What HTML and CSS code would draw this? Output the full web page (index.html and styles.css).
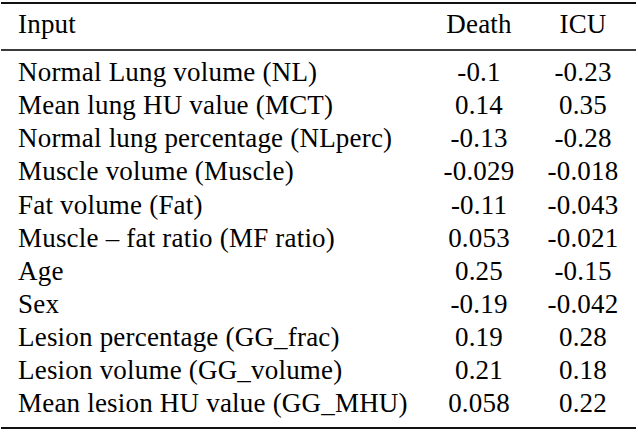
FILE: index.html
```html
<!DOCTYPE html>
<html>
<head>
<meta charset="utf-8">
<link rel="stylesheet" href="styles.css">
</head>
<body>
<table class="tbl">
  <colgroup>
    <col class="c-input">
    <col class="c-death">
    <col class="c-icu">
  </colgroup>
  <thead>
    <tr><th class="lbl">Input</th><th>Death</th><th>ICU</th></tr>
  </thead>
  <tbody>
    <tr class="first"><td class="lbl">Normal Lung volume (NL)</td><td>-0.1</td><td>-0.23</td></tr>
    <tr><td class="lbl">Mean lung HU value (MCT)</td><td>0.14</td><td>0.35</td></tr>
    <tr><td class="lbl">Normal lung percentage (NLperc)</td><td>-0.13</td><td>-0.28</td></tr>
    <tr><td class="lbl">Muscle volume (Muscle)</td><td>-0.029</td><td>-0.018</td></tr>
    <tr><td class="lbl">Fat volume (Fat)</td><td>-0.11</td><td>-0.043</td></tr>
    <tr><td class="lbl">Muscle – fat ratio (MF ratio)</td><td>0.053</td><td>-0.021</td></tr>
    <tr><td class="lbl">Age</td><td>0.25</td><td>-0.15</td></tr>
    <tr><td class="lbl">Sex</td><td>-0.19</td><td>-0.042</td></tr>
    <tr><td class="lbl">Lesion percentage (GG_frac)</td><td>0.19</td><td>0.28</td></tr>
    <tr><td class="lbl">Lesion volume (GG_volume)</td><td>0.21</td><td>0.18</td></tr>
    <tr class="last"><td class="lbl">Mean lesion HU value (GG_MHU)</td><td>0.058</td><td>0.22</td></tr>
  </tbody>
</table>
</body>
</html>
```

FILE: styles.css
```css
html, body {
  margin: 0;
  padding: 0;
  background: #ffffff;
}
body {
  padding: 2px 0 0 1px;
  font-family: "Liberation Serif", "Times New Roman", Times, serif;
  font-size: 27px;
  color: #000;
}
.tbl {
  border-collapse: collapse;
  table-layout: fixed;
  width: 635px;
  border-top: 2px solid #111;
  border-bottom: 2px solid #111;
  font-family: "Liberation Serif", "Times New Roman", Times, serif;
  font-size: 27px;
  letter-spacing: 0.2px;
}
.c-input { width: 427px; }
.c-death { width: 102px; }
.c-icu { width: 106px; }
.tbl th, .tbl td {
  padding: 0;
  line-height: 33.1px;
  font-weight: normal;
  text-align: center;
  white-space: nowrap;
}
.tbl .lbl {
  text-align: left;
  padding-left: 17px;
}
.tbl thead th {
  padding-top: 4.3px;
  padding-bottom: 7.5px;
  border-bottom: 2px solid #3a3a3a;
}
.tbl tr.first td { padding-top: 5.3px; }
.tbl tr.last td { padding-bottom: 7px; }
```
